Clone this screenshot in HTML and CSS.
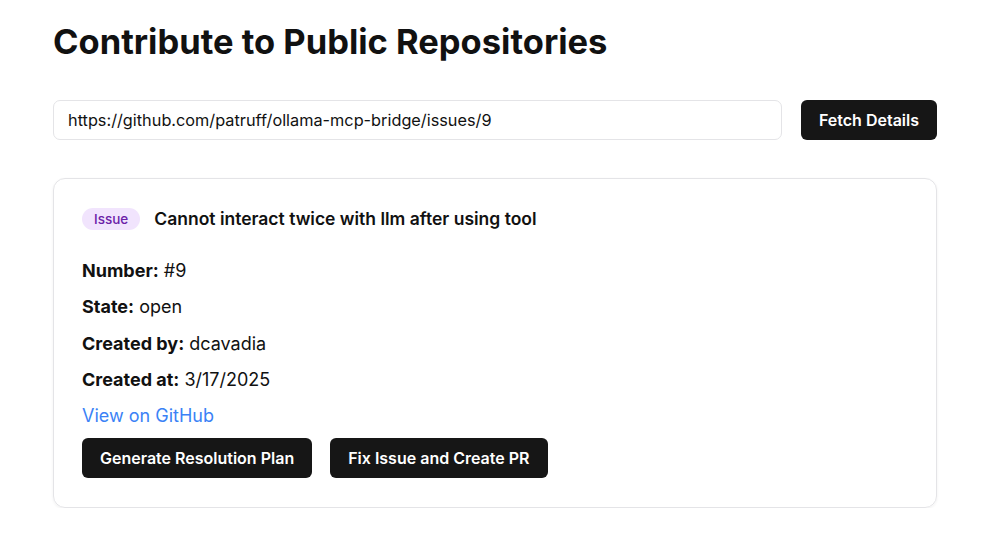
FILE: index.html
```html
<!DOCTYPE html>
<html>
<head>
<meta charset="utf-8">
<link rel="stylesheet" href="styles.css">
</head>
<body>
<main class="page">
  <h1 class="title">Contribute to Public Repositories</h1>
  <div class="fetch-row">
    <input class="url-input" type="text" value="https://github.com/patruff/ollama-mcp-bridge/issues/9">
    <button class="btn">Fetch Details</button>
  </div>
  <section class="card">
    <div class="card-head">
      <span class="badge">Issue</span>
      <h2 class="issue-title">Cannot interact twice with llm after using tool</h2>
    </div>
    <div class="details">
      <p class="row"><strong>Number:</strong> #9</p>
      <p class="row"><strong>State:</strong> open</p>
      <p class="row"><strong>Created by:</strong> dcavadia</p>
      <p class="row"><strong>Created at:</strong> 3/17/2025</p>
      <a class="row link" href="#">View on GitHub</a>
    </div>
    <div class="actions">
      <button class="btn">Generate Resolution Plan</button>
      <button class="btn">Fix Issue and Create PR</button>
    </div>
  </section>
</main>
</body>
</html>
```
FILE: styles.css
```css
* { box-sizing: border-box; }
body {
  margin: 0;
  background: #ffffff;
  font-family: Inter, "Noto Sans", sans-serif;
  color: #111111;
}
.page {
  width: 884px;
  margin-left: 53px;
  padding-top: 22px;
}
.title {
  margin: 0;
  font-size: 34.5px;
  font-weight: 700;
  line-height: 40px;
}
.fetch-row {
  display: flex;
  gap: 19px;
  margin-top: 38px;
}
.url-input {
  flex: 1;
  height: 40px;
  border: 1px solid #e4e4e7;
  border-radius: 7px;
  padding: 0 14px;
  font-family: inherit;
  font-size: 16.3px;
  color: #111;
  outline: none;
}
.btn {
  height: 40px;
  background: #161616;
  color: #fff;
  border: none;
  border-radius: 6px;
  padding: 0 18px;
  font-family: inherit;
  font-size: 16px;
  font-weight: 600;
  cursor: pointer;
}
.card {
  margin-top: 38px;
  border: 1px solid #e4e4e7;
  border-radius: 12px;
  padding: 28px 28px 29px;
  box-shadow: 0 1px 3px rgba(0,0,0,0.06);
}
.card-head {
  display: flex;
  align-items: center;
  gap: 14px;
}
.badge {
  background: #f1e4fd;
  color: #6b21a8;
  font-size: 13.5px;
  font-weight: 500;
  padding: 3px 12px;
  border-radius: 999px;
  line-height: 16px;
}
.issue-title {
  margin: 0;
  font-size: 17.5px;
  font-weight: 600;
  line-height: 24px;
}
.details {
  margin-top: 28px;
  display: flex;
  flex-direction: column;
  gap: 12.3px;
}
.row {
  margin: 0;
  font-size: 18px;
  line-height: 24px;
}
.row strong { font-weight: 700; }
.link {
  color: #3b82f6;
  text-decoration: none;
}
.actions {
  display: flex;
  gap: 18px;
  margin-top: 10px;
}
```
